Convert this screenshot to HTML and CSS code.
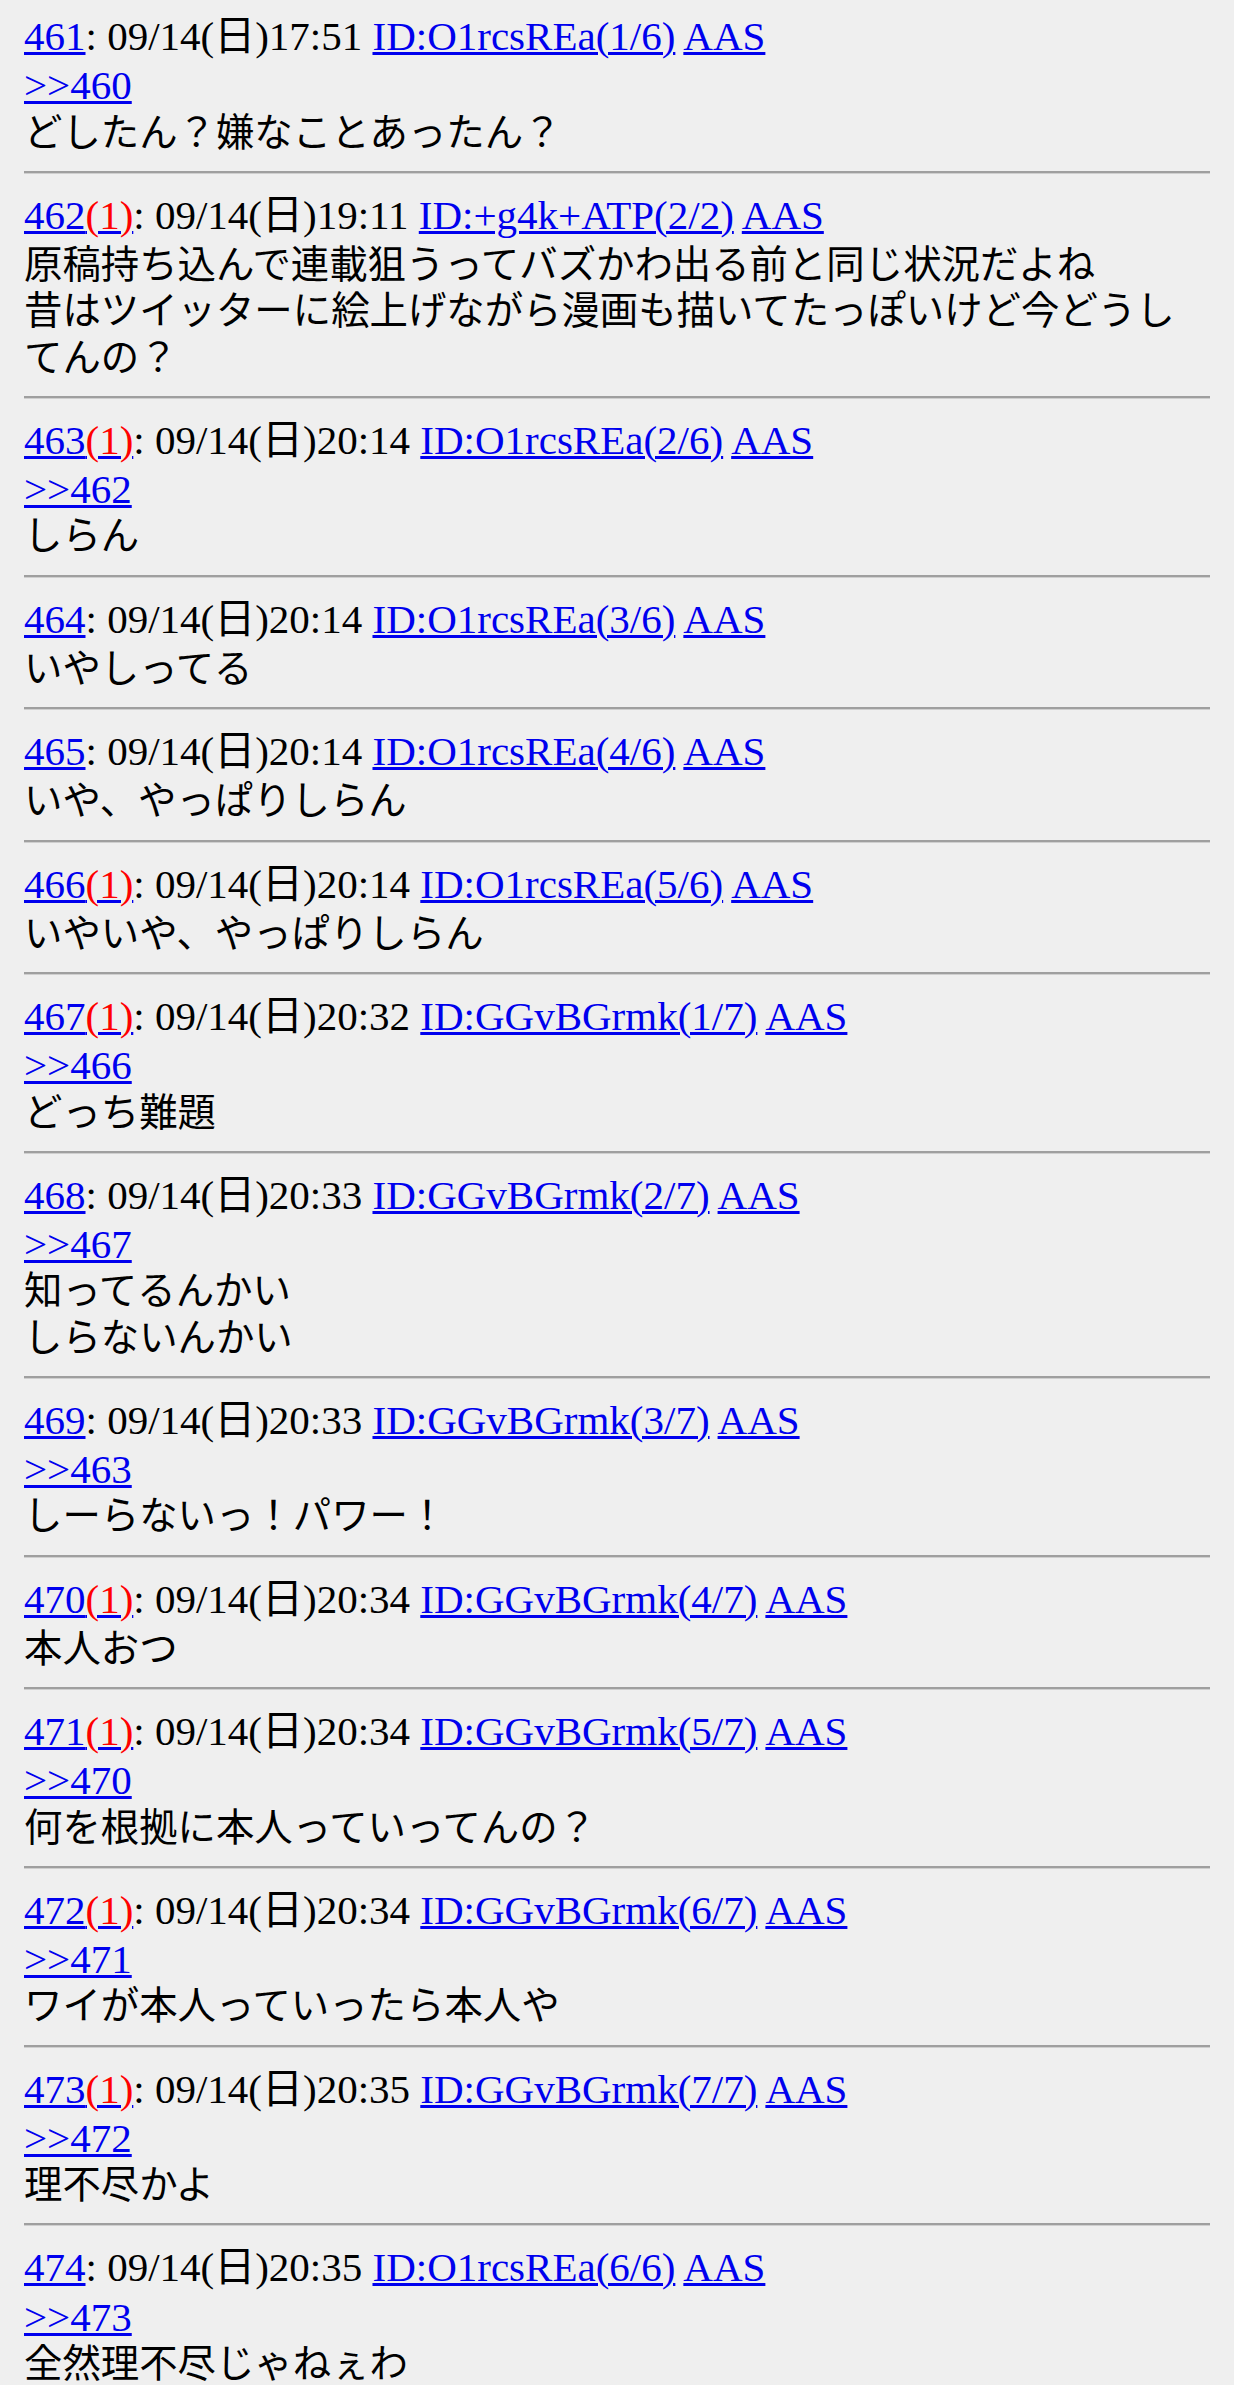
FILE: index.html
```html
<!DOCTYPE html>
<html lang="ja">
<head>
    <meta charset="UTF-8">
    <meta name="viewport" content="width=device-width, initial-scale=1.0">
    <title>スレッド</title>
    <link rel="stylesheet" href="styles.css">
</head>
<body>
    <div class="thread">

        <div class="post">
            <div class="head"><a href="#" class="num">461</a>: 09/14(日)17:51 <a href="#">ID:O1rcsREa(1/6)</a> <a href="#">AAS</a></div>
            <div class="msg"><a href="#">&gt;&gt;460</a><br>どしたん？嫌なことあったん？</div>
        </div>
        <hr class="sep">

        <div class="post">
            <div class="head"><a href="#" class="num">462<span class="res">(1)</span></a>: 09/14(日)19:11 <a href="#">ID:+g4k+ATP(2/2)</a> <a href="#">AAS</a></div>
            <div class="msg">原稿持ち込んで連載狙うってバズかわ出る前と同じ状況だよね<br>昔はツイッターに絵上げながら漫画も描いてたっぽいけど今どうしてんの？</div>
        </div>
        <hr class="sep">

        <div class="post">
            <div class="head"><a href="#" class="num">463<span class="res">(1)</span></a>: 09/14(日)20:14 <a href="#">ID:O1rcsREa(2/6)</a> <a href="#">AAS</a></div>
            <div class="msg"><a href="#">&gt;&gt;462</a><br>しらん</div>
        </div>
        <hr class="sep">

        <div class="post">
            <div class="head"><a href="#" class="num">464</a>: 09/14(日)20:14 <a href="#">ID:O1rcsREa(3/6)</a> <a href="#">AAS</a></div>
            <div class="msg">いやしってる</div>
        </div>
        <hr class="sep">

        <div class="post">
            <div class="head"><a href="#" class="num">465</a>: 09/14(日)20:14 <a href="#">ID:O1rcsREa(4/6)</a> <a href="#">AAS</a></div>
            <div class="msg">いや、やっぱりしらん</div>
        </div>
        <hr class="sep">

        <div class="post">
            <div class="head"><a href="#" class="num">466<span class="res">(1)</span></a>: 09/14(日)20:14 <a href="#">ID:O1rcsREa(5/6)</a> <a href="#">AAS</a></div>
            <div class="msg">いやいや、やっぱりしらん</div>
        </div>
        <hr class="sep">

        <div class="post">
            <div class="head"><a href="#" class="num">467<span class="res">(1)</span></a>: 09/14(日)20:32 <a href="#">ID:GGvBGrmk(1/7)</a> <a href="#">AAS</a></div>
            <div class="msg"><a href="#">&gt;&gt;466</a><br>どっち難題</div>
        </div>
        <hr class="sep">

        <div class="post">
            <div class="head"><a href="#" class="num">468</a>: 09/14(日)20:33 <a href="#">ID:GGvBGrmk(2/7)</a> <a href="#">AAS</a></div>
            <div class="msg"><a href="#">&gt;&gt;467</a><br>知ってるんかい<br>しらないんかい</div>
        </div>
        <hr class="sep">

        <div class="post">
            <div class="head"><a href="#" class="num">469</a>: 09/14(日)20:33 <a href="#">ID:GGvBGrmk(3/7)</a> <a href="#">AAS</a></div>
            <div class="msg"><a href="#">&gt;&gt;463</a><br>しーらないっ！パワー！</div>
        </div>
        <hr class="sep">

        <div class="post">
            <div class="head"><a href="#" class="num">470<span class="res">(1)</span></a>: 09/14(日)20:34 <a href="#">ID:GGvBGrmk(4/7)</a> <a href="#">AAS</a></div>
            <div class="msg">本人おつ</div>
        </div>
        <hr class="sep">

        <div class="post">
            <div class="head"><a href="#" class="num">471<span class="res">(1)</span></a>: 09/14(日)20:34 <a href="#">ID:GGvBGrmk(5/7)</a> <a href="#">AAS</a></div>
            <div class="msg"><a href="#">&gt;&gt;470</a><br>何を根拠に本人っていってんの？</div>
        </div>
        <hr class="sep">

        <div class="post">
            <div class="head"><a href="#" class="num">472<span class="res">(1)</span></a>: 09/14(日)20:34 <a href="#">ID:GGvBGrmk(6/7)</a> <a href="#">AAS</a></div>
            <div class="msg"><a href="#">&gt;&gt;471</a><br>ワイが本人っていったら本人や</div>
        </div>
        <hr class="sep">

        <div class="post">
            <div class="head"><a href="#" class="num">473<span class="res">(1)</span></a>: 09/14(日)20:35 <a href="#">ID:GGvBGrmk(7/7)</a> <a href="#">AAS</a></div>
            <div class="msg"><a href="#">&gt;&gt;472</a><br>理不尽かよ</div>
        </div>
        <hr class="sep">

        <div class="post">
            <div class="head"><a href="#" class="num">474</a>: 09/14(日)20:35 <a href="#">ID:O1rcsREa(6/6)</a> <a href="#">AAS</a></div>
            <div class="msg"><a href="#">&gt;&gt;473</a><br>全然理不尽じゃねぇわ</div>
        </div>

    </div>
</body>
</html>
```

FILE: styles.css
```css
body {
    margin: 0;
    background: #efefef;
    color: #000;
    font-family: "Noto Sans CJK JP", sans-serif;
    font-size: 38.4px;
    line-height: 46.25px;
}

.thread {
    padding: 13px 24px 0;
}

/* header line and anchors use the serif face */
.head,
.msg a {
    font-family: "Liberation Serif", "Noto Sans CJK JP", serif;
    font-size: 41px;
}

/* keep the serif anchor from stretching the CJK line box */
.msg a {
    line-height: 36px;
}

a {
    color: #0000ee;
    text-decoration: underline;
    text-decoration-thickness: 3px;
}

.res {
    color: #ff0000;
}

.sep {
    height: 0;
    margin: 19px 0 18px;
    border: 0;
    border-top: 2px solid #9f9f9f;
    border-bottom: 1px solid #cfcfcf;
}
```
